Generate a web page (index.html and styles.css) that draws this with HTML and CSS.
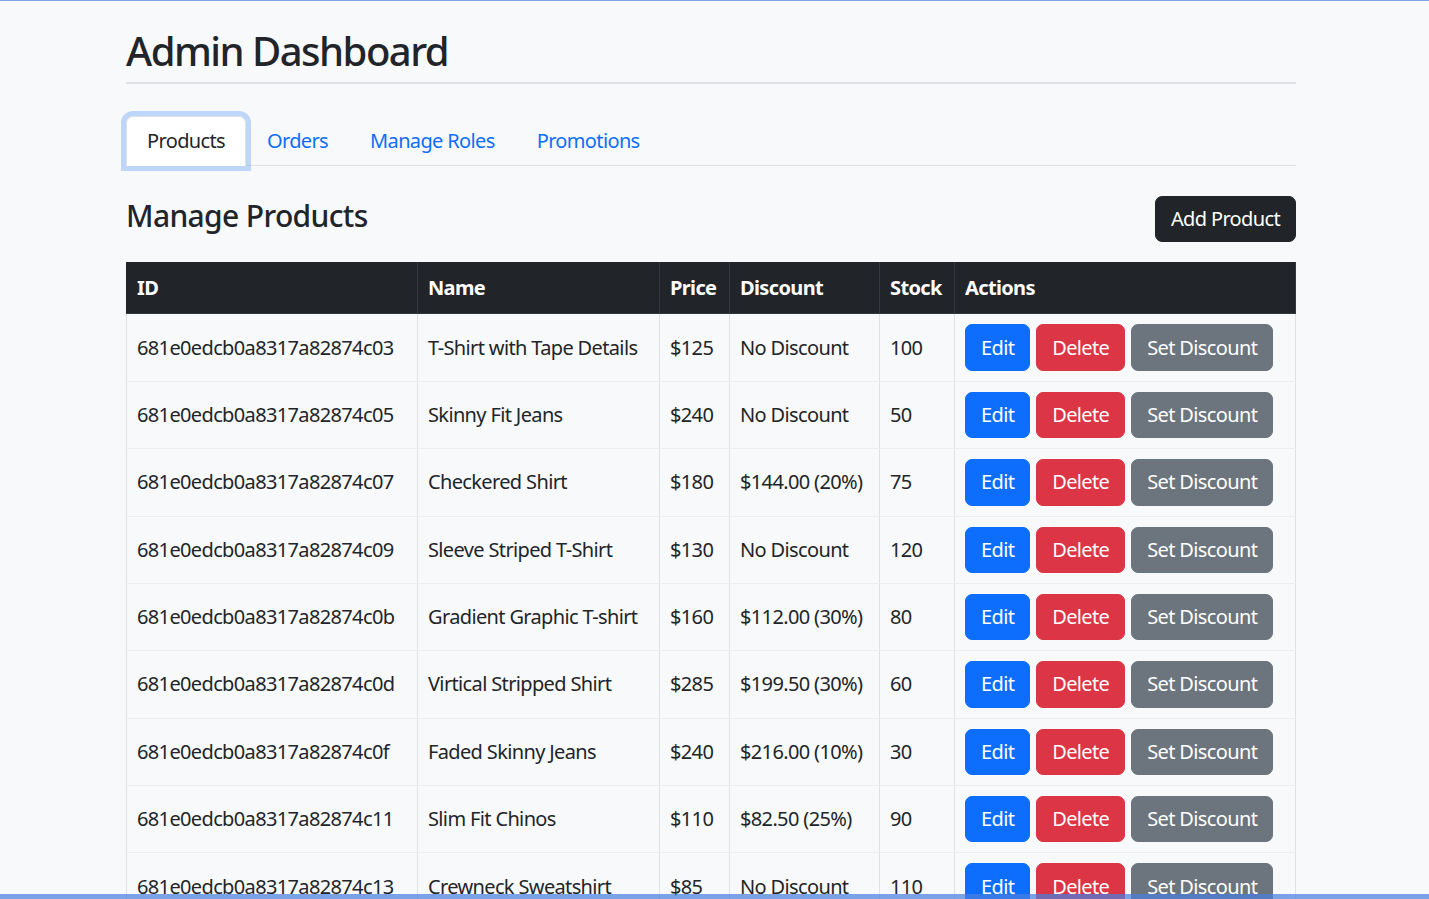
FILE: index.html
```html
<!DOCTYPE html>
<html lang="en">
<head>
<meta charset="utf-8">
<title>Admin Dashboard</title>
<link rel="stylesheet" href="styles.css">
</head>
<body>
<div class="frame-top"></div>
<div class="container">
  <h2 class="page-title">Admin Dashboard</h2>

  <ul class="nav-tabs">
    <li><a class="nav-link active" href="#">Products</a></li>
    <li><a class="nav-link" href="#">Orders</a></li>
    <li><a class="nav-link" href="#">Manage Roles</a></li>
    <li><a class="nav-link" href="#">Promotions</a></li>
  </ul>

  <div class="section-head">
    <h4 class="section-title">Manage Products</h4>
    <button class="btn btn-dark">Add Product</button>
  </div>

  <table class="table">
    <colgroup>
      <col class="c-id"><col class="c-name"><col class="c-price"><col class="c-disc"><col class="c-stock"><col class="c-act">
    </colgroup>
    <thead>
      <tr><th>ID</th><th>Name</th><th>Price</th><th>Discount</th><th>Stock</th><th>Actions</th></tr>
    </thead>
    <tbody>
      <tr><td>681e0edcb0a8317a82874c03</td><td>T-Shirt with Tape Details</td><td>$125</td><td>No Discount</td><td>100</td><td class="actions"><button class="btn btn-primary">Edit</button><button class="btn btn-danger">Delete</button><button class="btn btn-secondary">Set Discount</button></td></tr>
      <tr><td>681e0edcb0a8317a82874c05</td><td>Skinny Fit Jeans</td><td>$240</td><td>No Discount</td><td>50</td><td class="actions"><button class="btn btn-primary">Edit</button><button class="btn btn-danger">Delete</button><button class="btn btn-secondary">Set Discount</button></td></tr>
      <tr><td>681e0edcb0a8317a82874c07</td><td>Checkered Shirt</td><td>$180</td><td>$144.00 (20%)</td><td>75</td><td class="actions"><button class="btn btn-primary">Edit</button><button class="btn btn-danger">Delete</button><button class="btn btn-secondary">Set Discount</button></td></tr>
      <tr><td>681e0edcb0a8317a82874c09</td><td>Sleeve Striped T-Shirt</td><td>$130</td><td>No Discount</td><td>120</td><td class="actions"><button class="btn btn-primary">Edit</button><button class="btn btn-danger">Delete</button><button class="btn btn-secondary">Set Discount</button></td></tr>
      <tr><td>681e0edcb0a8317a82874c0b</td><td>Gradient Graphic T-shirt</td><td>$160</td><td>$112.00 (30%)</td><td>80</td><td class="actions"><button class="btn btn-primary">Edit</button><button class="btn btn-danger">Delete</button><button class="btn btn-secondary">Set Discount</button></td></tr>
      <tr><td>681e0edcb0a8317a82874c0d</td><td>Virtical Stripped Shirt</td><td>$285</td><td>$199.50 (30%)</td><td>60</td><td class="actions"><button class="btn btn-primary">Edit</button><button class="btn btn-danger">Delete</button><button class="btn btn-secondary">Set Discount</button></td></tr>
      <tr><td>681e0edcb0a8317a82874c0f</td><td>Faded Skinny Jeans</td><td>$240</td><td>$216.00 (10%)</td><td>30</td><td class="actions"><button class="btn btn-primary">Edit</button><button class="btn btn-danger">Delete</button><button class="btn btn-secondary">Set Discount</button></td></tr>
      <tr><td>681e0edcb0a8317a82874c11</td><td>Slim Fit Chinos</td><td>$110</td><td>$82.50 (25%)</td><td>90</td><td class="actions"><button class="btn btn-primary">Edit</button><button class="btn btn-danger">Delete</button><button class="btn btn-secondary">Set Discount</button></td></tr>
      <tr><td>681e0edcb0a8317a82874c13</td><td>Crewneck Sweatshirt</td><td>$85</td><td>No Discount</td><td>110</td><td class="actions"><button class="btn btn-primary">Edit</button><button class="btn btn-danger">Delete</button><button class="btn btn-secondary">Set Discount</button></td></tr>
    </tbody>
  </table>
</div>
<div class="frame-bottom"></div>
</body>
</html>
```
FILE: styles.css
```css
html { overflow: hidden; }
body {
  margin: 0;
  padding-right: 7px;
  background: #f8f9fa;
  color: #212529;
  font-family: "Noto Sans", "Open Sans", sans-serif;
  font-size: 20px;
  line-height: 30px;
  letter-spacing: -0.032em;
}
.frame-top {
  position: fixed; left: 0; right: 0; top: 0; height: 1px;
  background: #7ea4e6;
  z-index: 10;
}
.frame-bottom {
  position: fixed; left: 0; right: 0; bottom: 0; height: 5px;
  background: rgba(74, 128, 222, 0.72);
  z-index: 10;
}
.container {
  width: 1170px;
  margin: 0 auto;
  padding-top: 27px;
  box-sizing: border-box;
}
.page-title {
  margin: 0;
  font-size: 40px;
  font-weight: 500;
  line-height: 48px;
  letter-spacing: -0.038em;
  padding-bottom: 7px;
  border-bottom: 2px solid #dee2e6;
}
.nav-tabs {
  list-style: none;
  margin: 32px 0 30px;
  padding: 0;
  display: flex;
  border-bottom: 1px solid #dee2e6;
}
.nav-tabs li { margin-bottom: -1px; }
.nav-link {
  display: block;
  padding: 9px 20px;
  border: 1px solid transparent;
  border-radius: 7px 7px 0 0;
  color: #0d6efd;
  text-decoration: none;
}
.nav-link.active {
  color: #212529;
  background: #fff;
  border-color: #dee2e6 #dee2e6 #fff;
  box-shadow: 0 0 0 5px rgba(13, 110, 253, 0.25);
}
.section-head {
  display: flex;
  justify-content: space-between;
  align-items: center;
  margin-bottom: 20px;
}
.section-title {
  margin: 2px 0 8px;
  font-size: 30px;
  font-weight: 500;
  line-height: 36px;
}
.btn {
  font-family: inherit;
  font-size: 20px;
  line-height: 30px;
  letter-spacing: inherit;
  padding: 7.2px 15px;
  border: 1px solid transparent;
  border-radius: 7px;
  color: #fff;
  cursor: pointer;
}
.btn-dark { background: #212529; border-color: #212529; }
.btn-primary { background: #0d6efd; border-color: #0d6efd; }
.btn-danger { background: #dc3545; border-color: #dc3545; }
.btn-secondary { background: #6c757d; border-color: #6c757d; }
.actions .btn { margin-right: 6px; }
.table {
  width: 100%;
  table-layout: fixed;
  border-collapse: collapse;
  border: 1px solid #dee2e6;
}
.c-id { width: 291px; }
.c-name { width: 242px; }
.c-price { width: 70px; }
.c-disc { width: 150px; }
.c-stock { width: 75px; }
.table th {
  background: #212529;
  color: #fff;
  font-weight: 700;
  text-align: left;
  padding: 10px;
  border: 1px solid #32383e;
  border-top-color: #212529;
}
.table td {
  padding: 10px;
  vertical-align: middle;
  white-space: nowrap;
  border-left: 1px solid #dee2e6;
  border-right: 1px solid #dee2e6;
  border-bottom: 1px solid #eceef0;
}
.table th:first-child { border-left-color: #212529; }
```
